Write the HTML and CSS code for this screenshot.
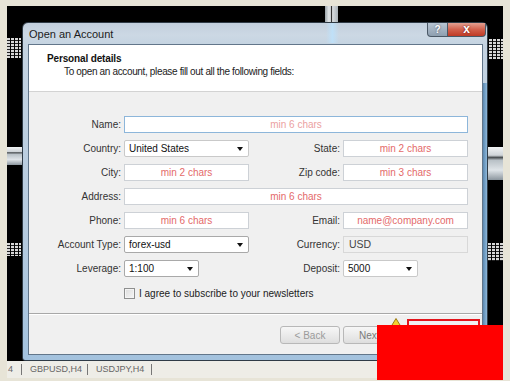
FILE: index.html
```html
<!DOCTYPE html>
<html lang="en">
<head>
  <meta charset="UTF-8">
  <title>Open an Account</title>
  <link rel="stylesheet" href="styles.css">
</head>
<body>
  <div class="desk">
    <!-- bits of the chart behind the dialog -->
    <span class="deco vbar"></span>
    <span class="deco code code-l1"></span>
    <span class="deco code code-r1"></span>
    <span class="deco band band-l"></span>
    <span class="deco band band-r"></span>
    <span class="deco code code-l2"></span>
    <span class="deco code code-r2"></span>

    <div class="window">
      <div class="titlebar">
        <span class="title">Open an Account</span>
        <div class="caption-btns">
          <span class="cap-btn help">?</span>
          <span class="cap-btn close">x</span>
        </div>
      </div>

      <div class="client">
        <div class="header">
          <div class="h-title">Personal details</div>
          <div class="h-sub">To open an account, please fill out all the following fields:</div>
        </div>

        <div class="form">
          <label class="lbl">Name:</label>
          <div class="field wide focus">min 6 chars</div>

          <label class="lbl">Country:</label>
          <div class="combo light">United States</div>
          <label class="lbl">State:</label>
          <div class="field">min 2 chars</div>

          <label class="lbl">City:</label>
          <div class="field">min 2 chars</div>
          <label class="lbl">Zip code:</label>
          <div class="field">min 3 chars</div>

          <label class="lbl">Address:</label>
          <div class="field wide">min 6 chars</div>

          <label class="lbl">Phone:</label>
          <div class="field">min 6 chars</div>
          <label class="lbl">Email:</label>
          <div class="field">name@company.com</div>

          <label class="lbl">Account Type:</label>
          <div class="combo">forex-usd</div>
          <label class="lbl">Currency:</label>
          <div class="field disabled">USD</div>

          <label class="lbl">Leverage:</label>
          <div class="combo short">1:100</div>
          <label class="lbl">Deposit:</label>
          <div class="combo short light">5000</div>

          <div class="check-row">
            <span class="checkbox"></span>
            <span>I agree to subscribe to your newsletters</span>
          </div>
        </div>

        <div class="footer">
          <button class="btn">&lt; Back</button>
          <button class="btn next">Next</button>
        </div>
      </div>
    </div>
  </div>

  <div class="tabs">
    <span class="tab first">4</span>
    <span class="tab">GBPUSD,H4</span>
    <span class="tab">USDJPY,H4</span>
  </div>

  <!-- redaction drawn over the screenshot -->
  <svg class="warn" width="12" height="10" viewBox="0 0 12 10">
    <polygon points="6,0.5 11.5,9.5 0.5,9.5" fill="#f4d030" stroke="#9a7a10" stroke-width="1"/>
  </svg>
  <div class="redact-outline"></div>
  <div class="redact"></div>
</body>
</html>
```

FILE: styles.css
```css
* {
  box-sizing: border-box;
}

body {
  margin: 0;
  width: 510px;
  height: 381px;
  overflow: hidden;
  background-color: #e7e4d7;
  font-family: "Liberation Sans", Arial, sans-serif;
  font-size: 10px;
  color: #222;
}

/* black chart area behind the dialog */
.desk {
  position: relative;
  margin: 6px 7px 0;
  height: 355px;
  background-color: #000;
}

.deco {
  position: absolute;
  display: block;
}

.vbar {
  left: 318px;
  top: 0;
  width: 13px;
  height: 16px;
  background: linear-gradient(to right, #9aa3a8 0, #e2e6e8 30%, #c8ccd0 45%, #333 48%, #333 54%, #d9dde0 58%, #aab2b8 100%);
}

.code {
  background:
    repeating-linear-gradient(to bottom, #d8d8d8 0, #d8d8d8 2px, #222 2px, #222 3px),
    #000;
  -webkit-mask: repeating-linear-gradient(to right, #000 0, #000 3px, transparent 3px, transparent 4px);
  mask: repeating-linear-gradient(to right, #000 0, #000 3px, transparent 3px, transparent 4px);
}

.code-l1 { left: 0; top: 32px; width: 14px; height: 20px; }
.code-r1 { left: 482px; top: 33px; width: 14px; height: 20px; }
.code-l2 { left: 0; top: 237px; width: 14px; height: 13px; }
.code-r2 { left: 481px; top: 237px; width: 15px; height: 18px; }

.band {
  background: linear-gradient(to bottom, #f2f4f5 0, #cfd4d8 25%, #4a4f52 32%, #b8c0c6 40%, #dfe4e8 70%, #8c969e 100%);
}

.band-l { left: 0; top: 141px; width: 15px; height: 18px; }
.band-r { left: 481px; top: 141px; width: 15px; height: 33px; }

/* dialog window */
.window {
  position: absolute;
  left: 15px;
  top: 16px;
  width: 466px;
  height: 339px;
  border: 1px solid #2f3b46;
  border-radius: 6px 6px 3px 3px;
  background: linear-gradient(to bottom, #c2cfdc 0, #ccd8e4 12px, #c4d3e1 22px, #b6cbdf 60%, #a3c2de 100%);
  padding: 0 4px 5px 5px;
  display: flex;
  flex-direction: column;
}

.window::before {
  content: "";
  position: absolute;
  left: 303px;
  top: 0;
  width: 13px;
  height: 20px;
  background: linear-gradient(to right, rgba(190, 225, 250, 0) 0, rgba(190, 225, 250, 0.9) 50%, rgba(190, 225, 250, 0) 100%);
}

.window::after {
  content: "";
  position: absolute;
  right: 0;
  top: 60px;
  bottom: 10px;
  width: 4px;
  background: linear-gradient(to right, #5a88b0, #8fb8da);
}

.titlebar {
  position: relative;
  height: 21px;
  display: flex;
  align-items: center;
}

.title {
  font-size: 11px;
  color: #1c1c1c;
  padding-left: 1px;
}

.caption-btns {
  position: absolute;
  right: -3px;
  top: 0;
  display: flex;
}

.cap-btn {
  height: 14px;
  border: 1px solid #4a5866;
  border-top: none;
  color: #fff;
  font-weight: bold;
  text-align: center;
  line-height: 13px;
  font-size: 10px;
}

.help {
  width: 21px;
  border-radius: 0 0 0 4px;
  background: linear-gradient(to bottom, #b8c5d2, #8e9fb0);
  text-shadow: 0 0 2px #445;
}

.close {
  width: 38px;
  border-left: none;
  border-radius: 0 0 4px 0;
  background: linear-gradient(to bottom, #e3a091 0, #d2604c 50%, #bf3a25 100%);
  font-size: 12px;
  text-shadow: 0 0 2px #600;
}

.client {
  flex: 1;
  border: 1px solid #62768a;
  background-color: #f0f0f0;
  display: flex;
  flex-direction: column;
}

.header {
  height: 47px;
  background-color: #fff;
  border-bottom: 1px solid #d3d3d3;
  padding-top: 8px;
}

.h-title {
  font-weight: bold;
  padding-left: 18px;
  line-height: 12px;
  color: #111;
  letter-spacing: -0.15px;
}

.h-sub {
  padding-left: 35px;
  margin-top: 1px;
  line-height: 12px;
  color: #222;
  letter-spacing: -0.35px;
}

.form {
  display: grid;
  grid-template-columns: 92px 125px 88px 125px;
  grid-auto-rows: 17px;
  column-gap: 3px;
  row-gap: 7px;
  padding: 24px 0 12px;
  border-bottom: 1px solid #a8a8a8;
}

.lbl {
  text-align: right;
  line-height: 17px;
  color: #333;
}

.field {
  height: 17px;
  border: 1px solid #cdd1d6;
  background-color: #fff;
  color: #e46a6a;
  text-align: center;
  line-height: 15px;
  white-space: nowrap;
}

.wide {
  grid-column: 2 / 5;
}

.focus {
  border-color: #8db6da;
  color: #eba1a1;
}

.disabled {
  background-color: #f0f0f0;
  border-color: #d8d8d8;
  color: #444;
  text-align: left;
  padding-left: 5px;
  font-size: 10.5px;
}

.combo {
  position: relative;
  height: 17px;
  border: 1px solid #a9a9a9;
  border-radius: 2px;
  background-color: #fff;
  line-height: 15px;
  padding-left: 4px;
  color: #111;
}

.combo.light {
  border-color: #c9c9c9;
}

.combo::after {
  content: "";
  position: absolute;
  right: 5px;
  top: 6px;
  border-left: 3.5px solid transparent;
  border-right: 3.5px solid transparent;
  border-top: 4px solid #111;
}

.short {
  width: 75px;
}

.check-row {
  grid-column: 2 / 5;
  margin-top: 2px;
  display: flex;
  align-items: center;
  gap: 4px;
  color: #222;
}

.checkbox {
  width: 11px;
  height: 11px;
  border: 1px solid #8e8f8f;
  background: linear-gradient(to bottom right, #dcdcdc, #f6f6f6);
  box-shadow: inset 0 0 0 1px #f4f4f4;
}

.footer {
  flex: 1;
  border-top: 1px solid #fff;
  display: flex;
  justify-content: flex-end;
  gap: 3px;
  padding: 11px 79px 0 0;
}

.btn {
  width: 60px;
  height: 18px;
  border: 1px solid #b8b8b8;
  border-radius: 3px;
  background: linear-gradient(to bottom, #f7f7f7 0, #ebebeb 50%, #dedede 100%);
  color: #9b9b9b;
  font-family: "Liberation Sans", Arial, sans-serif;
  font-size: 10px;
  padding: 0;
}

.next {
  text-align: left;
  padding-left: 15px;
  color: #7a7a7a;
}

/* terminal tab strip */
.tabs {
  margin: 0 7px;
  height: 17px;
  background-color: #eeede7;
  display: flex;
  align-items: center;
  color: #666;
  font-size: 9px;
}

.tab {
  height: 11px;
  line-height: 11px;
  border-right: 1px solid #777;
  padding-left: 8px;
  width: 66px;
}

.tab.first {
  padding-left: 1px;
  width: 15px;
}

.tab:last-child {
  width: 64px;
}

/* red redaction box */
.redact {
  position: absolute;
  left: 377px;
  top: 325px;
  width: 126px;
  height: 55px;
  background-color: #ff0000;
}

.redact-outline {
  position: absolute;
  left: 407px;
  top: 319px;
  width: 73px;
  height: 12px;
  border: 2px solid #e3141c;
}

.warn {
  position: absolute;
  left: 390px;
  top: 318px;
}
```
